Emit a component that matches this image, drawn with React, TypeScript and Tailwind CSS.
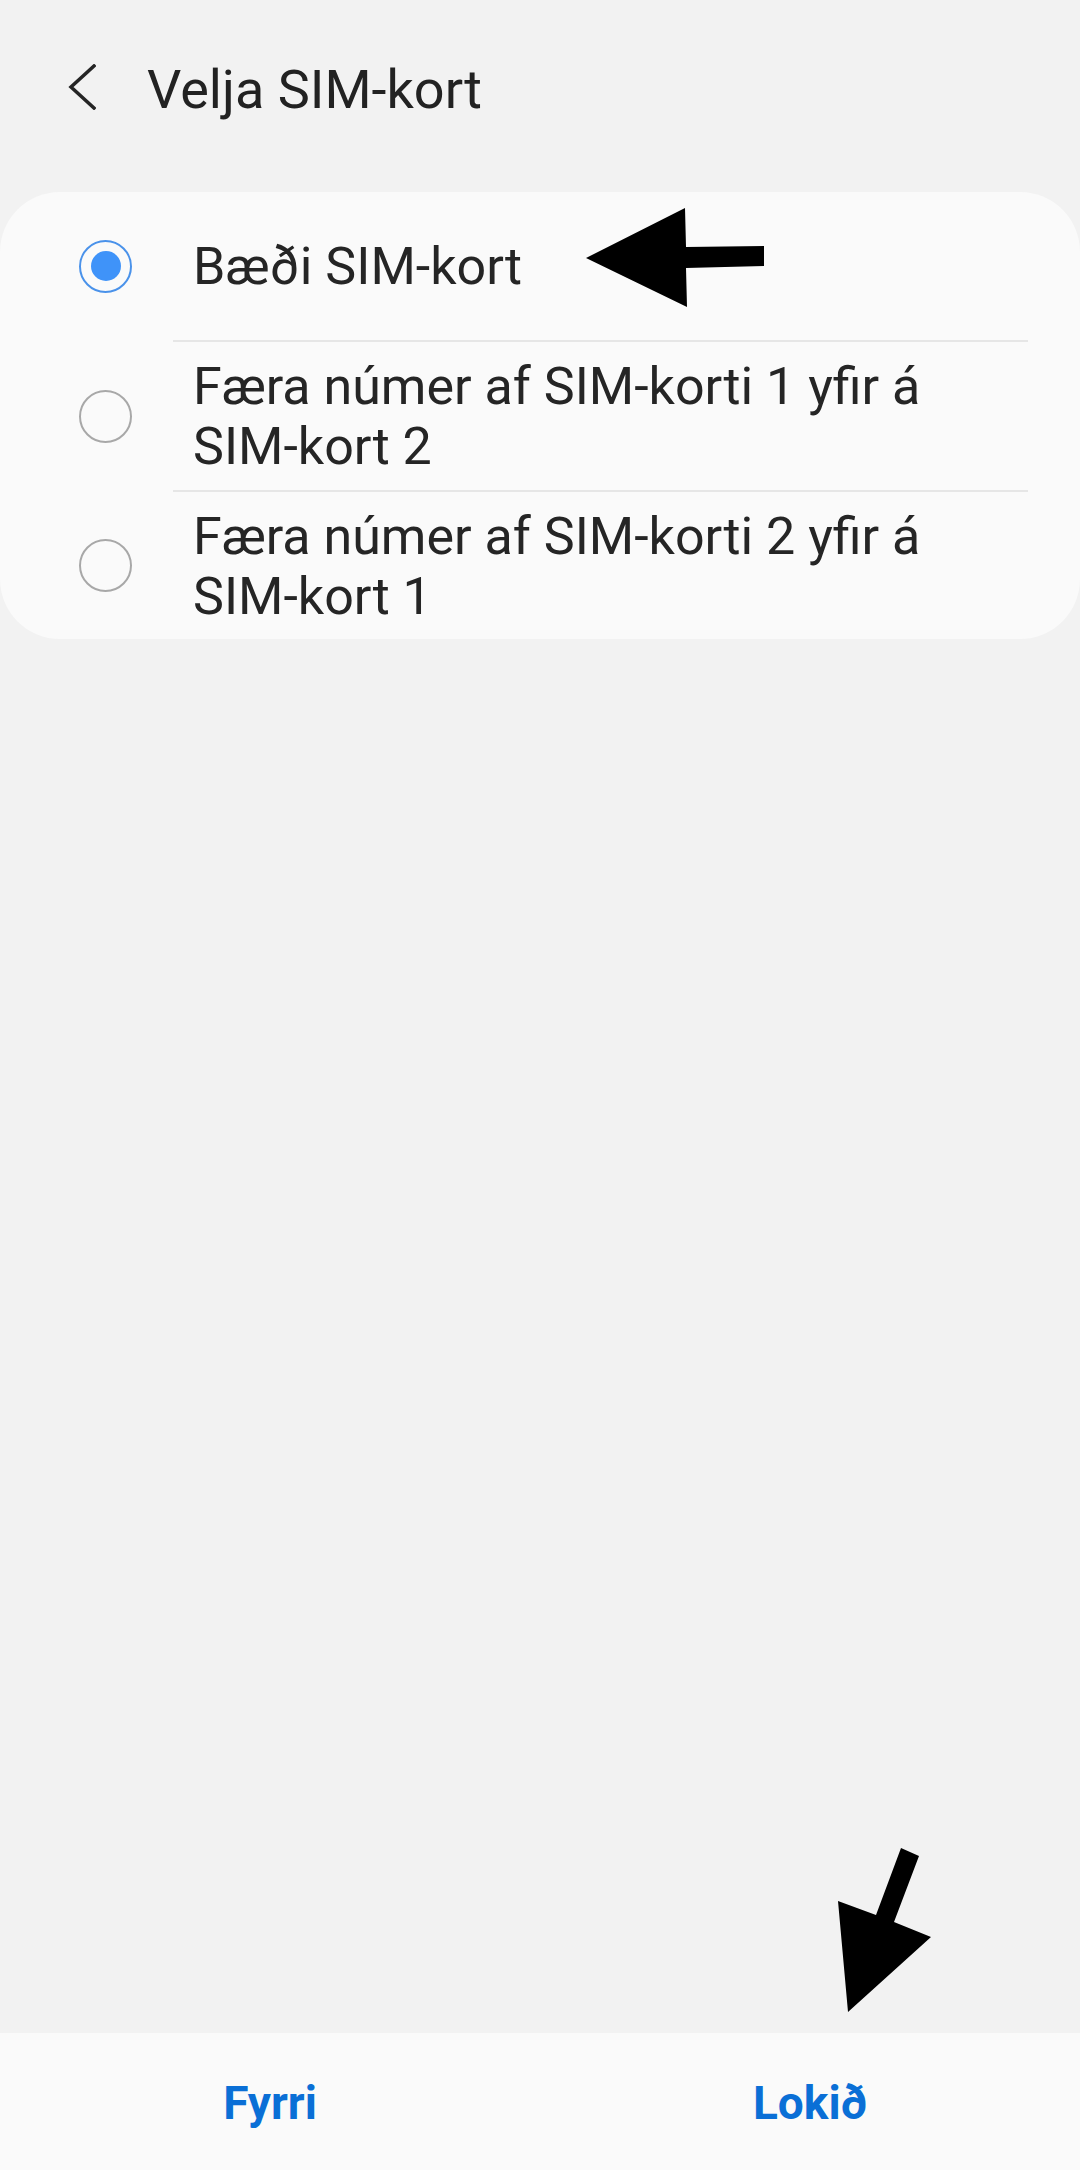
import React from "react";

function Radio({ selected }: { selected: boolean }) {
  return selected ? (
    <div className="w-[53px] h-[53px] rounded-full border-2 border-[#4a92ea] flex items-center justify-center shrink-0">
      <div className="w-[30px] h-[30px] rounded-full bg-[#3f93f9]" />
    </div>
  ) : (
    <div className="w-[53px] h-[53px] rounded-full border-2 border-[#a8a8a8] shrink-0" />
  );
}

function Row({ selected, text, h }: { selected: boolean; text: string; h: string }) {
  return (
    <div className={`flex items-center ${h}`}>
      <div className="ml-[79px]">
        <Radio selected={selected} />
      </div>
      <div className="ml-[61px] mr-[52px] pt-[2px] text-[52px] leading-[60px] text-[#252525]">
        {text}
      </div>
    </div>
  );
}

export default function App() {
  return (
    <div
      className="relative w-[1080px] h-[2170px] bg-[#f2f2f2] flex flex-col overflow-hidden"
      style={{ fontFamily: "Roboto, 'Noto Sans', sans-serif" }}
    >
      <div className="flex items-start h-[192px] pt-[58px] shrink-0">
        <svg className="ml-[68px] mt-[6px]" width="28" height="46" viewBox="0 0 28 46" fill="none">
          <path d="M26 2 L3 23 L26 44" stroke="#252525" strokeWidth="3.5" strokeLinecap="square" />
        </svg>
        <div className="ml-[51px] text-[54px] leading-[63px] text-[#222222]">Velja SIM-kort</div>
      </div>

      <div className="bg-[#fafafa] rounded-[60px] flex flex-col shrink-0">
        <Row selected={true} text="Bæði SIM-kort" h="h-[148px]" />
        <div className="ml-[173px] mr-[52px] h-[2px] bg-[#e6e6e6]" />
        <Row selected={false} text="Færa númer af SIM-korti 1 yfir á SIM-kort 2" h="h-[148px]" />
        <div className="ml-[173px] mr-[52px] h-[2px] bg-[#e6e6e6]" />
        <Row selected={false} text="Færa númer af SIM-korti 2 yfir á SIM-kort 1" h="h-[147px]" />
      </div>

      <div className="flex-1" />

      <div className="h-[137px] bg-[#fafafa] grid grid-cols-2 shrink-0">
        <div className="flex items-center justify-center pt-[3px] text-[46px] font-bold text-[#0a6fd6]">Fyrri</div>
        <div className="flex items-center justify-center pt-[3px] text-[46px] font-bold text-[#0a6fd6]">Lokið</div>
      </div>

      <svg
        className="absolute inset-0 pointer-events-none"
        width="1080"
        height="2170"
        viewBox="0 0 1080 2170"
      >
        <polygon points="586,258 685,208 686,247 764,246 764,266 686,268 687,307" fill="#000" />
        <polygon points="901,1848 919,1856 894,1922 931,1937 848,2012 838,1901 876,1915" fill="#000" />
      </svg>
    </div>
  );
}
